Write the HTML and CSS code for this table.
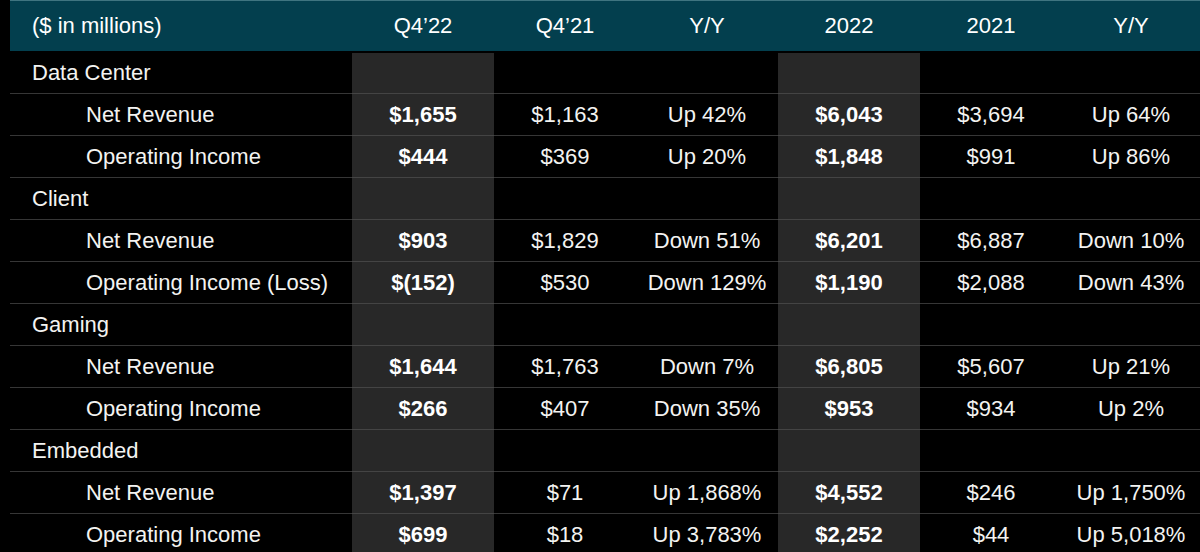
FILE: index.html
```html
<!DOCTYPE html>
<html lang="en">
<head>
<meta charset="utf-8">
<title>Segment results</title>
<link rel="stylesheet" href="styles.css">
</head>
<body>
<div class="table">
  <div class="head">
    <div class="hcell label">($ in millions)</div>
    <div class="hcell">Q4’22</div>
    <div class="hcell">Q4’21</div>
    <div class="hcell">Y/Y</div>
    <div class="hcell">2022</div>
    <div class="hcell">2021</div>
    <div class="hcell">Y/Y</div>
  </div>

  <div class="row first">
    <div class="cell label cat">Data Center</div>
    <div class="cell hl"></div><div class="cell"></div><div class="cell"></div>
    <div class="cell hl"></div><div class="cell"></div><div class="cell"></div>
  </div>
  <div class="row">
    <div class="cell label sub">Net Revenue</div>
    <div class="cell hl">$1,655</div><div class="cell">$1,163</div><div class="cell">Up 42%</div>
    <div class="cell hl">$6,043</div><div class="cell">$3,694</div><div class="cell">Up 64%</div>
  </div>
  <div class="row">
    <div class="cell label sub">Operating Income</div>
    <div class="cell hl">$444</div><div class="cell">$369</div><div class="cell">Up 20%</div>
    <div class="cell hl">$1,848</div><div class="cell">$991</div><div class="cell">Up 86%</div>
  </div>

  <div class="row">
    <div class="cell label cat">Client</div>
    <div class="cell hl"></div><div class="cell"></div><div class="cell"></div>
    <div class="cell hl"></div><div class="cell"></div><div class="cell"></div>
  </div>
  <div class="row">
    <div class="cell label sub">Net Revenue</div>
    <div class="cell hl">$903</div><div class="cell">$1,829</div><div class="cell">Down 51%</div>
    <div class="cell hl">$6,201</div><div class="cell">$6,887</div><div class="cell">Down 10%</div>
  </div>
  <div class="row">
    <div class="cell label sub">Operating Income (Loss)</div>
    <div class="cell hl">$(152)</div><div class="cell">$530</div><div class="cell">Down 129%</div>
    <div class="cell hl">$1,190</div><div class="cell">$2,088</div><div class="cell">Down 43%</div>
  </div>

  <div class="row">
    <div class="cell label cat">Gaming</div>
    <div class="cell hl"></div><div class="cell"></div><div class="cell"></div>
    <div class="cell hl"></div><div class="cell"></div><div class="cell"></div>
  </div>
  <div class="row">
    <div class="cell label sub">Net Revenue</div>
    <div class="cell hl">$1,644</div><div class="cell">$1,763</div><div class="cell">Down 7%</div>
    <div class="cell hl">$6,805</div><div class="cell">$5,607</div><div class="cell">Up 21%</div>
  </div>
  <div class="row">
    <div class="cell label sub">Operating Income</div>
    <div class="cell hl">$266</div><div class="cell">$407</div><div class="cell">Down 35%</div>
    <div class="cell hl">$953</div><div class="cell">$934</div><div class="cell">Up 2%</div>
  </div>

  <div class="row">
    <div class="cell label cat">Embedded</div>
    <div class="cell hl"></div><div class="cell"></div><div class="cell"></div>
    <div class="cell hl"></div><div class="cell"></div><div class="cell"></div>
  </div>
  <div class="row">
    <div class="cell label sub">Net Revenue</div>
    <div class="cell hl">$1,397</div><div class="cell">$71</div><div class="cell">Up 1,868%</div>
    <div class="cell hl">$4,552</div><div class="cell">$246</div><div class="cell">Up 1,750%</div>
  </div>
  <div class="row">
    <div class="cell label sub">Operating Income</div>
    <div class="cell hl">$699</div><div class="cell">$18</div><div class="cell">Up 3,783%</div>
    <div class="cell hl">$2,252</div><div class="cell">$44</div><div class="cell">Up 5,018%</div>
  </div>
</div>
</body>
</html>
```

FILE: styles.css
```css
html, body {
  margin: 0;
  padding: 0;
  background: #000;
}
body {
  width: 1200px;
  height: 552px;
  overflow: hidden;
  font-family: "Liberation Sans", Arial, sans-serif;
  font-size: 22px;
  color: #f3f3f1;
}
.table {
  padding-left: 10px;
}
.head,
.row {
  display: grid;
  grid-template-columns: 342px repeat(5, 142px) 138px;
}
.head {
  height: 50px;
  background: #033f4e;
  border-top: 1px solid #3f7480;
  margin-bottom: 2px;
}
.hcell {
  display: flex;
  align-items: center;
  justify-content: center;
  color: #ffffff;
}
.hcell.label {
  justify-content: flex-start;
  padding-left: 22px;
}
.cell {
  height: 41px;
  display: flex;
  align-items: center;
  justify-content: center;
  border-bottom: 1px solid #363636;
  box-sizing: border-box;
  height: 42px;
}
.row.first .cell {
  height: 41px;
}
.cell.label {
  justify-content: flex-start;
}
.cell.cat {
  padding-left: 22px;
}
.cell.sub {
  padding-left: 76px;
}
.cell.hl {
  background: #282828;
  border-bottom-color: #444444;
  font-weight: bold;
  color: #ffffff;
}
```
